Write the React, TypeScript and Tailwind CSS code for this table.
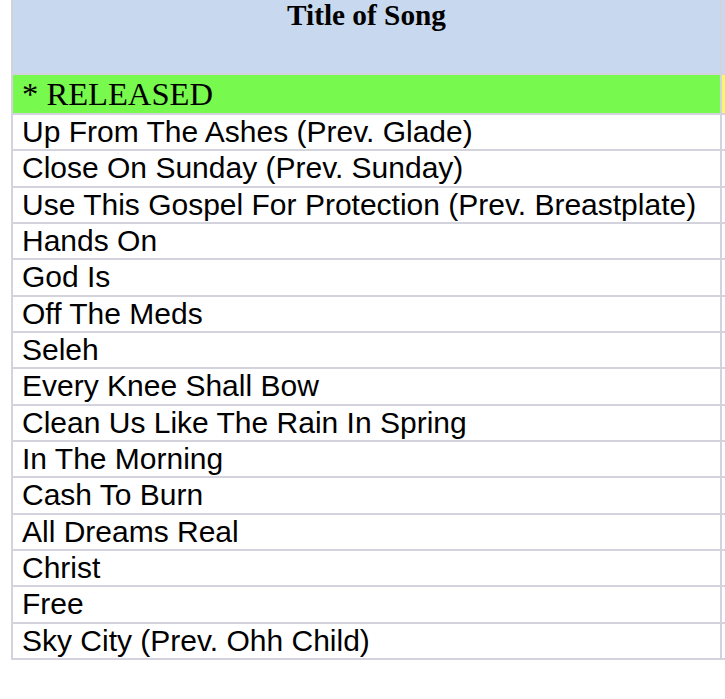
const songs = [
  "Up From The Ashes (Prev. Glade)",
  "Close On Sunday (Prev. Sunday)",
  "Use This Gospel For Protection (Prev. Breastplate)",
  "Hands On",
  "God Is",
  "Off The Meds",
  "Seleh",
  "Every Knee Shall Bow",
  "Clean Us Like The Rain In Spring",
  "In The Morning",
  "Cash To Burn",
  "All Dreams Real",
  "Christ",
  "Free",
  "Sky City (Prev. Ohh Child)",
];

export default function App() {
  return (
    <div className="w-[725px] h-[699px] overflow-hidden bg-white">
      <div className="ml-[11px] w-[800px] flex flex-col">
        {/* header */}
        <div className="flex h-[75px] border-b-2 border-[#d3d3de]">
          <div className="w-[711px] border-l-2 border-r-2 border-[#d3d3de] bg-[#c8d8ee] flex justify-center">
            <span className="font-['Liberation_Serif',serif] font-bold text-[29.3px] leading-[30px] text-black">
              Title of Song
            </span>
          </div>
          <div className="flex-1 bg-[#c8d8ee]" />
        </div>
        {/* released */}
        <div className="flex h-[40px] border-b-2 border-[#d3d3de]">
          <div className="w-[711px] border-l-2 border-r-2 border-[#d3d3de] bg-[#77f94d] pl-[9px] flex items-center">
            <span className="font-['Liberation_Serif',serif] text-[32.6px] leading-none text-black pt-[1px]">
              * RELEASED
            </span>
          </div>
          <div className="flex-1 bg-[#fdf56a]" />
        </div>
        {songs.map((s) => (
          <div key={s} className="flex h-[36.33px] border-b-2 border-[#d3d3de]">
            <div className="w-[711px] border-l-2 border-r-2 border-[#d3d3de] bg-white pl-[9px] flex items-center">
              <span className="font-['Liberation_Sans',Arial,sans-serif] text-[30px] leading-none text-black whitespace-nowrap">
                {s}
              </span>
            </div>
            <div className="flex-1 bg-white" />
          </div>
        ))}
      </div>
    </div>
  );
}
